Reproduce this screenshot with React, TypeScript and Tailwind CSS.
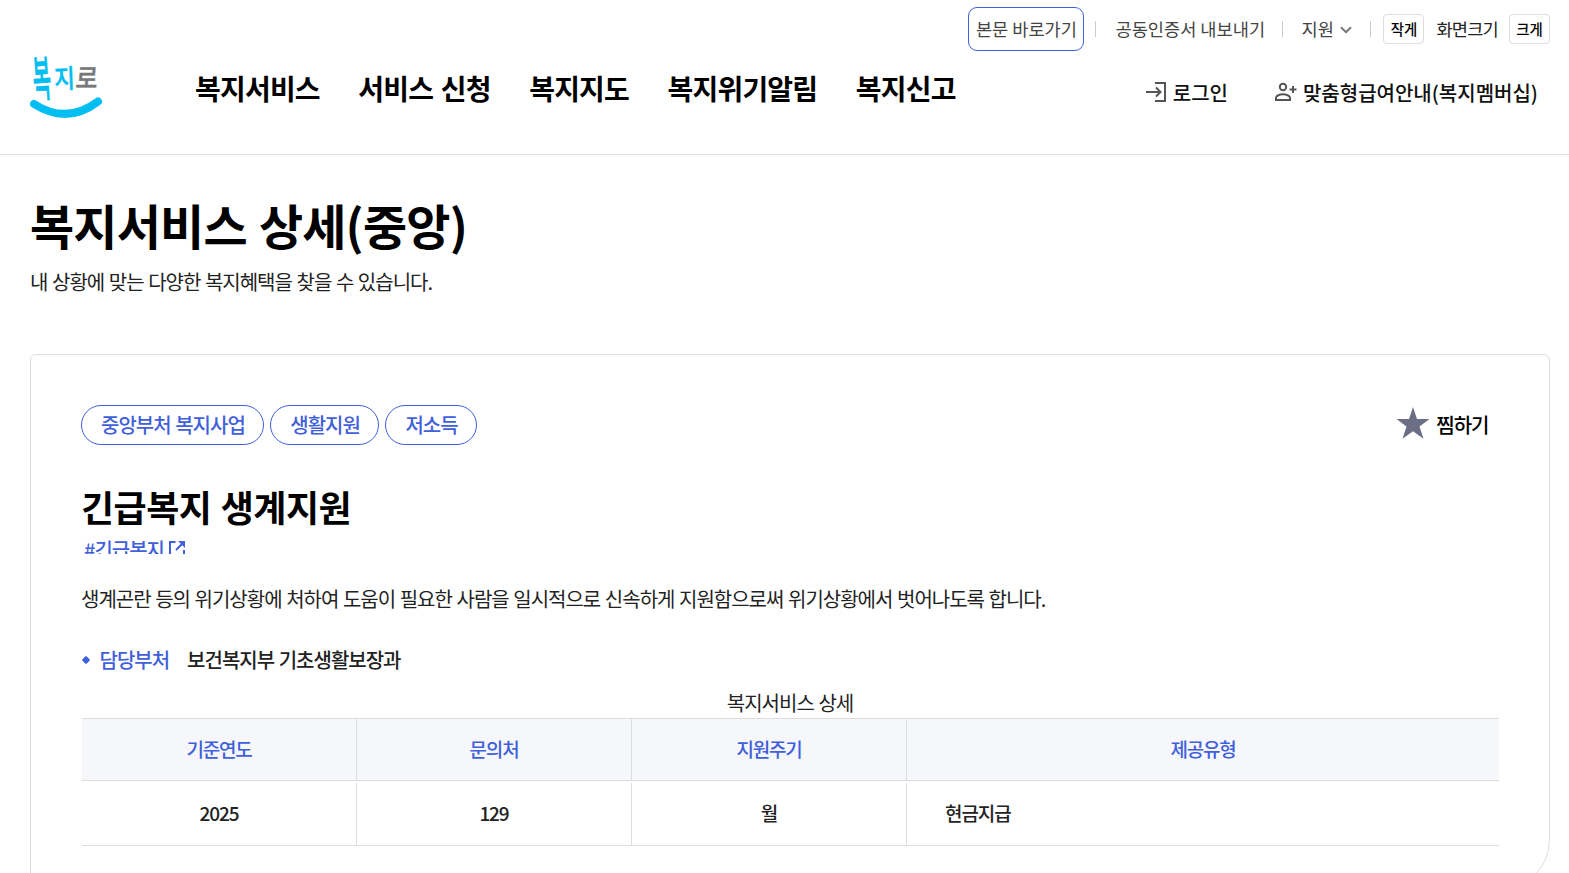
import { ChevronDown } from 'lucide-react'

const navItems = ['복지서비스', '서비스 신청', '복지지도', '복지위기알림', '복지신고']
const tags = ['중앙부처 복지사업', '생활지원', '저소득']

const headCell = 'flex items-center justify-center border-[#ddd] text-[19px] font-medium tracking-[-1.2px] text-[#3f5fdb]'
const bodyCell = 'flex items-center border-[#ddd] pb-px text-[19px] font-medium tracking-[-1.1px] text-[#222]'

function Logo() {
  return (
    <svg width="74" height="64" viewBox="0 0 74 64" className="block overflow-visible">
      <g fontFamily="'Noto Sans CJK KR', sans-serif" fontWeight="500" fill="#00bdf2" stroke="#00bdf2" strokeWidth="0.4" letterSpacing="0">
        <text transform="translate(4 42) rotate(-4) scale(0.9 2.2)" fontSize="22">복</text>
        <text transform="translate(24.500 33.500) rotate(-2) scale(0.9 1.05)" fontSize="25">지</text>
        <text transform="translate(45 33) skewX(-5) scale(1 1.12)" fontSize="24" fill="#77787b" stroke="#77787b">로</text>
      </g>
      <path d="M4 49 Q37 70 68 46.500" fill="none" stroke="#00bdf2" strokeWidth="8" strokeLinecap="round" />
    </svg>
  )
}

function LoginIcon() {
  return (
    <svg width="22" height="22" viewBox="0 0 22 22" fill="none" stroke="#555" strokeWidth="2" className="-ml-px -mt-0.5 mr-px">
      <path d="M10 2h10v18H10M1 11h14M11 6.500l4.500 4.500-4.500 4.500" />
    </svg>
  )
}

function MemberIcon() {
  return (
    <svg width="23" height="20" viewBox="0 0 23 20" fill="none" stroke="#555" strokeWidth="2" className="-ml-px -mt-0.5 mr-px">
      <circle cx="9" cy="5" r="3.2" />
      <path d="M2 18v-2c0-2.500 4-3.700 7-3.700s7 1.200 7 3.700v2zM15.500 7.500h7M19 4v7" />
    </svg>
  )
}

function Divider() {
  return <span className="h-4 w-px bg-[#ccc]" />
}

function Header() {
  return (
    <header className="flex h-[155px] border-b border-[#ddd]">
      <div className="ml-[30px] mt-[55px] w-[165px]">
        <Logo />
      </div>
      <nav className="mt-[68px] flex h-10 items-center gap-[38.500px] text-[28px] font-bold tracking-[-0.8px] [word-spacing:2px]">
        {navItems.map((item) => (
          <a key={item} className="whitespace-nowrap">{item}</a>
        ))}
      </nav>
      <div className="ml-auto flex flex-col items-end whitespace-nowrap [word-spacing:0px]">
        <div className="mr-[19px] mt-[7px] flex h-11 items-center text-[17.600px] tracking-normal text-[#444]">
          <a className="flex h-11 w-[116px] items-center justify-center rounded-[9px] border border-[#3f5fdb]">본문 바로가기</a>
          <span className="ml-[11px] mr-[19px] flex"><Divider /></span>
          <a>공동인증서 내보내기</a>
          <span className="ml-[16.500px] mr-[19px] flex"><Divider /></span>
          <a className="flex items-center gap-[3px]">
            지원
            <ChevronDown size={18} strokeWidth={2.500} color="#777" className="mt-0.5" />
          </a>
          <span className="ml-[15.500px] mr-3 flex"><Divider /></span>
          <button className="h-[30px] w-[41px] rounded border border-[#ddd] text-[14.400px] font-medium text-black">작게</button>
          <span className="ml-3 mr-[11px] tracking-[-0.8px] text-[#222]">화면크기</span>
          <button className="h-[30px] w-[41px] rounded border border-[#ddd] text-[14.400px] font-medium text-black">크게</button>
        </div>
        <div className="mr-[31px] mt-[27px] flex h-[30px] items-center text-[20px] font-medium tracking-normal text-[#111]">
          <a className="mr-[47px] flex items-center gap-[5px]">
            <LoginIcon />
            로그인
          </a>
          <a className="flex items-center gap-[5px]">
            <MemberIcon />
            맞춤형급여안내(복지멤버십)
          </a>
        </div>
      </div>
    </header>
  )
}

function ServiceTable() {
  return (
    <div className="ml-px mt-[13px]">
      <p className="mr-px text-center leading-[30px]">복지서비스 상세</p>
      <div className="grid h-[63px] grid-cols-[275px_275px_275px_1fr] border-y border-[#ddd] bg-[#f5f7fb]">
        <div className={`${headCell} border-r`}>기준연도</div>
        <div className={`${headCell} border-r`}>문의처</div>
        <div className={`${headCell} border-r`}>지원주기</div>
        <div className={headCell}>제공유형</div>
      </div>
      <div className="mt-0.5 grid h-[63px] grid-cols-[275px_275px_275px_1fr] border-b border-[#ddd]">
        <div className={`${bodyCell} justify-center border-r`}>2025</div>
        <div className={`${bodyCell} justify-center border-r`}>129</div>
        <div className={`${bodyCell} justify-center border-r`}>월</div>
        <div className={`${bodyCell} pl-[38px]`}>현금지급</div>
      </div>
    </div>
  )
}

export default function App() {
  return (
    <div className="h-[873px] overflow-hidden bg-white font-['Noto_Sans_CJK_KR',sans-serif] text-[20px] tracking-[-1px] text-black [word-spacing:1.1px]">
      <Header />
      <main className="px-[30px]">
        <h1 className="mt-[33px] text-[48px] font-bold leading-[72px] tracking-[-0.8px] [word-spacing:2px]">복지서비스 상세(중앙)</h1>
        <p className="mt-[7px] leading-[30px] text-[#222]">내 상황에 맞는 다양한 복지혜택을 찾을 수 있습니다.</p>

        <section className="mt-[57px] h-[536px] w-[1520px] rounded-md rounded-br-[50px] border border-[#ddd] px-[50px] pt-[50px] text-[#222]">
          <div className="flex h-10 items-center justify-between font-medium">
            <div className="flex gap-1.5 text-[#3f5fdb]">
              {tags.map((tag) => (
                <span key={tag} className="flex h-10 items-center rounded-full border border-[#3f5fdb] pl-[19px] pr-[18.500px]">{tag}</span>
              ))}
            </div>
            <button className="mr-[10.500px] flex items-center gap-1.5 text-black">
              <svg width="34" height="32" viewBox="0 0 34 32" fill="#6b6f85" className="-mt-[5px]">
                <path d="M17 0l4 12h12.500l-10 7.500 4 12.200L17 24.200 6.500 31.700l4-12.200L.5 12H13z" />
              </svg>
              찜하기
            </button>
          </div>

          <h2 className="mt-[34px] text-[36px] font-bold leading-[54px] tracking-[-0.5px] text-black [word-spacing:1.500px]">긴급복지 생계지원</h2>
          <div className="mt-0.5 flex h-[19px] items-start overflow-hidden pl-[3px] font-medium text-[#3f5fdb]">
            <span className="leading-[29px]">#긴급복지</span>
            <svg width="16" height="16" viewBox="0 0 16 16" fill="none" stroke="#3f5fdb" strokeWidth="2" className="ml-[5px] mt-1.5">
              <path d="M6.500 1H1v14h14V9M15 1L7 9" />
              <path d="M9 0h7v7z" fill="#3f5fdb" stroke="none" />
            </svg>
          </div>
          <p className="mt-[30px] leading-[30px]">
            생계곤란 등의 위기상황에 처하여 도움이 필요한 사람을 일시적으로 신속하게 지원함으로써 위기상황에서 벗어나도록 합니다.
          </p>
          <div className="mt-[31px] flex items-center font-medium leading-[30px]">
            <span className="ml-[2px] mr-[10.500px] size-[6px] rotate-45 rounded-[1px] bg-[#3f5fdb]" />
            <span className="text-[#3f5fdb]">담당부처</span>
            <span className="ml-[18px]">보건복지부 기초생활보장과</span>
          </div>
          <ServiceTable />
        </section>
      </main>
    </div>
  )
}
